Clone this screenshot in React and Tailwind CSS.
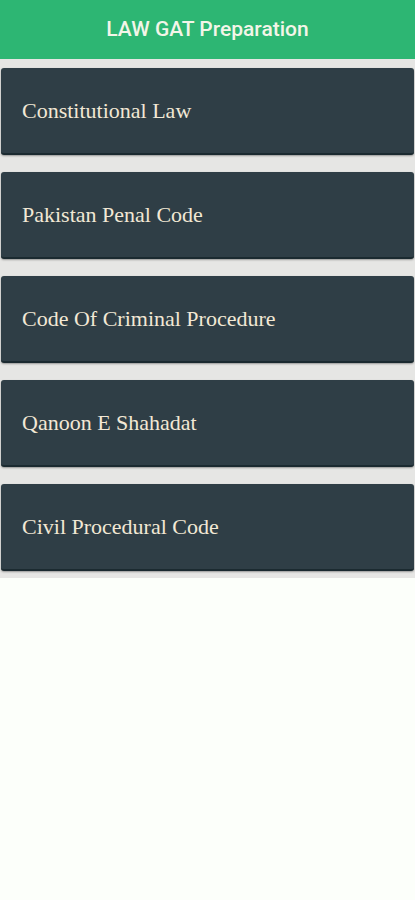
import React from "react";

const subjects = [
  "Constitutional Law",
  "Pakistan Penal Code",
  "Code Of Criminal Procedure",
  "Qanoon E Shahadat",
  "Civil Procedural Code",
];

const App = () => {
  return (
    <div className="min-h-[900px] w-[415px] bg-[#fcfffa]">
      {/* app bar */}
      <div className="flex h-[59px] items-center justify-center bg-[#2db673] font-['Roboto',sans-serif] text-[21px] font-medium text-[#f3f5e8]">
        LAW GAT Preparation
      </div>

      {/* subject list */}
      <div className="flex flex-col gap-[17px] bg-[#e6e6e4] px-[1px] pb-[7px] pt-[9px]">
        {subjects.map((name) => (
          <div
            key={name}
            className="flex h-[87px] items-center rounded-[3px] border-b-2 border-[#1b2a30] bg-[#2f3e46] pl-[21px] font-['Liberation_Serif',serif] text-[22px] text-[#f2e8d5] shadow-[0_1px_2px_rgba(0,0,0,0.35)]"
          >
            {name}
          </div>
        ))}
      </div>
    </div>
  );
};

export default App;
